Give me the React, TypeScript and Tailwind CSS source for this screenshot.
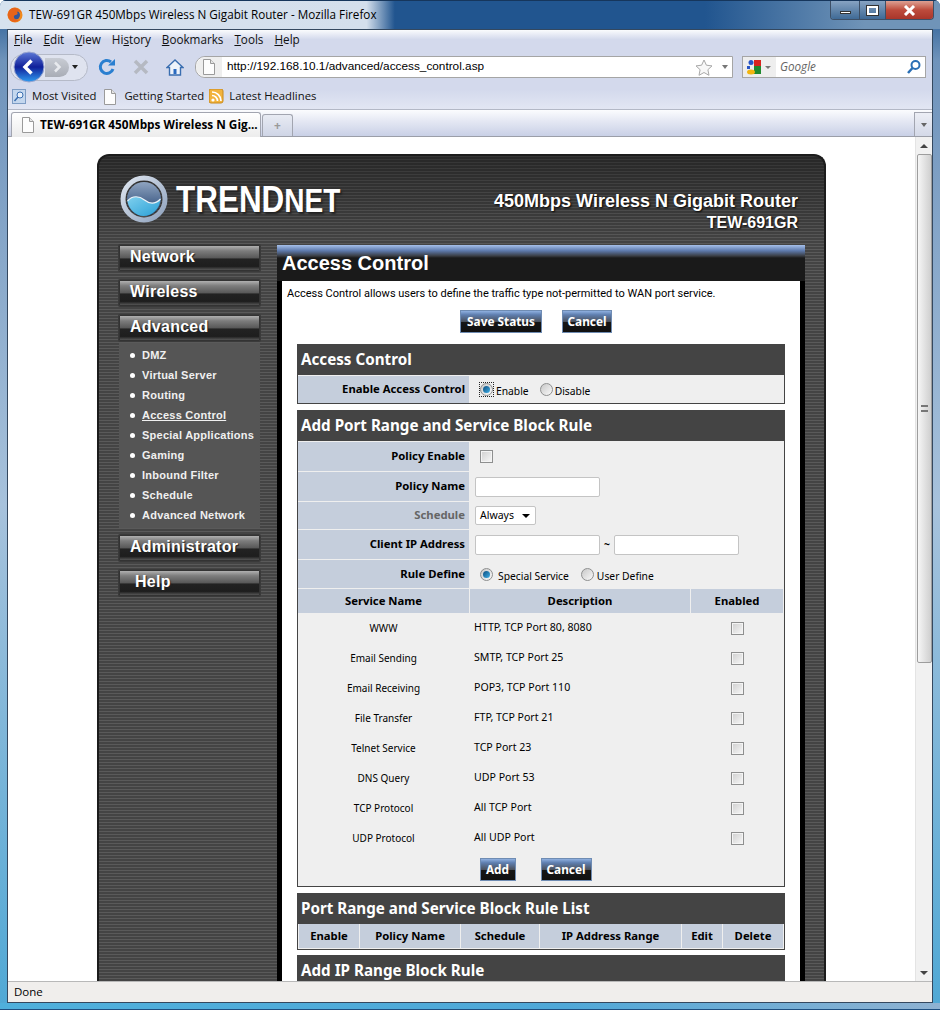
import React from "react"

const sideLinks = ["DMZ", "Virtual Server", "Routing", "Access Control", "Special Applications", "Gaming", "Inbound Filter", "Schedule", "Advanced Network"]

const services = [
  ["WWW", "HTTP, TCP Port 80, 8080"],
  ["Email Sending", "SMTP, TCP Port 25"],
  ["Email Receiving", "POP3, TCP Port 110"],
  ["File Transfer", "FTP, TCP Port 21"],
  ["Telnet Service", "TCP Port 23"],
  ["DNS Query", "UDP Port 53"],
  ["TCP Protocol", "All TCP Port"],
  ["UDP Protocol", "All UDP Port"],
]

function PageIcon({ className = "" }: { className?: string }) {
  return (
    <svg width="14" height="16" viewBox="0 0 14 16" className={className}>
      <path d="M1.5.5h7l4 4v11h-11z" fill="#fdfdfd" stroke="#9a9a9a" />
      <path d="M8.5.5v4h4" fill="#e6e6e6" stroke="#9a9a9a" />
    </svg>
  )
}

function Checkbox({ className = "" }: { className?: string }) {
  return <span className={`block h-[13px] w-[13px] border border-[#8e8f8f] bg-gradient-to-br from-[#cfcfcf] to-[#f8f8f8] shadow-[inset_0_0_0_1px_#f4f4f4] ${className}`} />
}

function Radio({ on = false }: { on?: boolean }) {
  return (
    <span className="flex h-[13px] w-[13px] items-center justify-center rounded-full border border-[#8e8f8f] bg-gradient-to-br from-[#c8c8c8] to-[#fafafa]">
      {on && <span className="h-[7px] w-[7px] rounded-full bg-gradient-to-br from-[#0e4f80] to-[#3fb0e8]" />}
    </span>
  )
}

function PageButton({ label, width }: { label: string; width: string }) {
  return (
    <button className={`${width} h-[23px] border border-[#6f8cb3] bg-[linear-gradient(180deg,#8fb0e0_0%,#5f7fb0_18%,#4a4f58_52%,#161616_53%,#111_100%)] text-center font-['Noto_Sans',sans-serif] text-[11.8px] font-bold text-white`}>
      {label}
    </button>
  )
}

function NavButton({ label, indent = "pl-[10px]" }: { label: string; indent?: string }) {
  return (
    <div className="h-[26px] rounded-[1px] border border-[#333] bg-[linear-gradient(180deg,#b0b0b0_0%,#7d7d7d_20%,#5a5a5a_48%,#222_55%,#1e1e1e_85%,#555_100%)] shadow-[0_0_0_1px_#3a3a3a]">
      <div className={`${indent} font-['Liberation_Sans',sans-serif] text-[16px] leading-[22px] font-bold tracking-[0.25px] text-white [text-shadow:1px_1px_1px_#222]`}>{label}</div>
    </div>
  )
}

function SectionTitle({ children }: { children: React.ReactNode }) {
  return (
    <div className="flex h-[30px] items-center bg-[#444] pb-[2px] pl-[3px] font-['Noto_Sans',sans-serif] text-[15.2px] font-bold whitespace-nowrap text-white">
      {children}
    </div>
  )
}

function FormRow({ label, height, dim = false, children }: { label: string; height: string; dim?: boolean; children: React.ReactNode }) {
  return (
    <div className={`${height} grid grid-cols-[171px_1fr] border-b border-[#efefef] last:border-b-0`}>
      <div className={`flex items-center justify-end bg-[#c5cedc] pr-[4px] text-[11.3px] font-bold ${dim ? "text-[#666]" : "text-black"}`}>{label}</div>
      <div className="flex items-center pl-[6px] text-[10.3px]">{children}</div>
    </div>
  )
}

function TextBox({ width = "w-[125px]" }: { width?: string }) {
  return <span className={`${width} block h-[20px] rounded-[2px] border border-[#c4c4c4] bg-white`} />
}

function RouterPage() {
  return (
    <div className="w-[729px] rounded-t-[12px] border-x-2 border-t-2 border-[#1c1c1c] bg-[linear-gradient(180deg,rgba(0,0,0,0.42)_0px,rgba(0,0,0,0)_90px),repeating-linear-gradient(180deg,#5a5a5a_0px,#5a5a5a_1px,#444_1px,#444_3px)]">
      <div className="flex h-[89px] items-start justify-between pr-[26px]">
        <div className="ml-[21px] mt-[19px] flex items-center gap-[8px]">
          <svg width="48" height="48" viewBox="0 0 48 48">
            <defs>
              <linearGradient id="ring" x1="0" y1="0" x2="1" y2="1">
                <stop offset="0" stopColor="#dfe6f0" />
                <stop offset="1" stopColor="#8fa2bd" />
              </linearGradient>
              <linearGradient id="ballTop" x1="0" y1="0" x2="0" y2="1">
                <stop offset="0" stopColor="#8fa4c0" />
                <stop offset="1" stopColor="#1f3f6e" />
              </linearGradient>
              <linearGradient id="ballLow" x1="0" y1="0" x2="1" y2="1">
                <stop offset="0" stopColor="#7fd0ee" />
                <stop offset="1" stopColor="#2a9fd6" />
              </linearGradient>
            </defs>
            <circle cx="24" cy="24" r="21" fill="none" stroke="url(#ring)" strokeWidth="5" />
            <circle cx="24" cy="24" r="17" fill="url(#ballTop)" />
            <path d="M7.5 26c5-6 12-5 17-1s11 4 16-1c-1 10-8 17-17 17-8 0-15-7-16-15z" fill="url(#ballLow)" />
            <path d="M7.5 26c5-6 12-5 17-1s11 4 16-1" fill="none" stroke="#eef3f8" strokeWidth="1.2" />
          </svg>
          <div className="origin-left scale-x-[0.85] font-['Liberation_Sans',sans-serif] text-[37px] leading-none font-bold whitespace-nowrap text-white [text-shadow:2px_2px_2px_#222]">
            TREND<span className="text-[33px]">NET</span>
          </div>
        </div>
        <div className="mt-[34px] text-right font-['Liberation_Sans',sans-serif] font-bold text-white [text-shadow:1px_1px_2px_#000]">
          <div className="text-[18px] leading-[22px]">450Mbps Wireless N Gigabit Router</div>
          <div className="text-[16px] leading-[21px]">TEW-691GR</div>
        </div>
      </div>

      <div className="flex pb-[40px]">
        <div className="ml-[20px] flex w-[141px] flex-col gap-[9px]">
          <NavButton label="Network" />
          <NavButton label="Wireless" />
          <div className="-mb-[2px]">
            <NavButton label="Advanced" />
            <div className="mt-[2px] flex h-[185px] flex-col bg-[#555] pl-[11px] pt-[2px]">
              {sideLinks.map((link) => (
                <div key={link} className="flex h-[20px] items-center gap-[7px] font-['Liberation_Sans',sans-serif] text-[11px] font-bold tracking-[0.25px] text-[#f0f0f0]">
                  <span className="h-[5px] w-[5px] rounded-full bg-white" />
                  <span className={link === "Access Control" ? "underline" : ""}>{link}</span>
                </div>
              ))}
            </div>
          </div>
          <NavButton label="Administrator" />
          <NavButton label="Help" indent="pl-[15px]" />
        </div>

        <div className="ml-[17px] w-[528px]">
          <div className="h-[36px] bg-[linear-gradient(180deg,#a6c0ea_0%,#5d79ab_16%,#3b3f46_30%,#1a1a1a_36%,#1a1a1a_100%)] pl-[5px] pt-[7px] font-['Liberation_Sans',sans-serif] text-[20px] leading-[23px] font-bold text-white">
            Access Control
          </div>
          <div className="border-x-[5px] border-black bg-white px-[15px] pb-[20px] font-['Noto_Sans',sans-serif] text-black">
            <div className="-mx-[10px] pt-[5px] font-['Roboto',sans-serif] text-[11px] leading-[15px] whitespace-nowrap">
              Access Control allows users to define the traffic type not-permitted to WAN port service.
            </div>
            <div className="mt-[9px] flex justify-center gap-[20px] pr-[10px]">
              <PageButton label="Save Status" width="w-[82px]" />
              <PageButton label="Cancel" width="w-[50px]" />
            </div>

            <div className="mt-[11px] border border-[#444] bg-[#efefef]">
              <SectionTitle>Access Control</SectionTitle>
              <div className="pt-px pr-px">
                <FormRow label="Enable Access Control" height="h-[27px]">
                  <div className="flex items-center gap-[2px] pl-[4px]">
                    <span className="block border border-dotted border-[#222] p-0">
                      <Radio on />
                    </span>
                    <span className="pt-[5px]">Enable</span>
                  </div>
                  <div className="ml-[11px] flex items-center gap-[2px]">
                    <Radio />
                    <span className="pt-[5px]">Disable</span>
                  </div>
                </FormRow>
              </div>
            </div>

            <div className="mt-[6px] border border-[#444] bg-[#efefef]">
              <SectionTitle>Add Port Range and Service Block Rule</SectionTitle>
              <div className="pt-px pr-px">
                <FormRow label="Policy Enable" height="h-[30px]">
                  <Checkbox className="ml-[5px]" />
                </FormRow>
                <FormRow label="Policy Name" height="h-[30px]">
                  <TextBox />
                </FormRow>
                <FormRow label="Schedule" height="h-[28px]" dim>
                  <span className="flex h-[19px] w-[61px] items-center justify-between rounded-[2px] border border-[#c4c4c4] bg-white pl-[4px] pr-[5px] text-[10.5px]">
                    Always
                    <span className="h-0 w-0 border-x-[4px] border-t-[4px] border-x-transparent border-t-black" />
                  </span>
                </FormRow>
                <FormRow label="Client IP Address" height="h-[30px]">
                  <TextBox />
                  <span className="w-[14px] text-center font-bold">~</span>
                  <TextBox />
                </FormRow>
                <FormRow label="Rule Define" height="h-[29px]">
                  <div className="flex items-center gap-[5px] pl-[5px]">
                    <Radio on />
                    <span className="pt-[5px]">Special Service</span>
                  </div>
                  <div className="ml-[12px] flex items-center gap-[3px]">
                    <Radio />
                    <span className="pt-[5px]">User Define</span>
                  </div>
                </FormRow>
                <div className="grid h-[24px] grid-cols-[171px_220px_1fr] gap-x-px text-center text-[11.3px] leading-[24px] font-bold">
                  <div className="bg-[#c5cedc]">Service Name</div>
                  <div className="bg-[#c5cedc]">Description</div>
                  <div className="bg-[#c5cedc]">Enabled</div>
                </div>
                {services.map(([name, desc]) => (
                  <div key={name} className="grid h-[30px] grid-cols-[171px_220px_1fr] items-center gap-x-px">
                    <div className="text-center text-[10px]">{name}</div>
                    <div className="pl-[4px] text-[10.6px]">{desc}</div>
                    <div className="flex justify-center">
                      <Checkbox />
                    </div>
                  </div>
                ))}
                <div className="mt-[5px] flex h-[28px] justify-center gap-[25px] pr-[10px]">
                  <PageButton label="Add" width="w-[36px]" />
                  <PageButton label="Cancel" width="w-[51px]" />
                </div>
              </div>
            </div>

            <div className="mt-[6px] border border-[#444] bg-[#efefef]">
              <SectionTitle>Port Range and Service Block Rule List</SectionTitle>
              <div className="px-px pb-px">
                <div className="grid h-[24px] grid-cols-[60px_100px_78px_141px_40px_1fr] gap-x-px text-center text-[11.3px] leading-[24px] font-bold">
                  {["Enable", "Policy Name", "Schedule", "IP Address Range", "Edit", "Delete"].map((head) => (
                    <div key={head} className="bg-[#c5cedc]">{head}</div>
                  ))}
                </div>
              </div>
            </div>

            <div className="mt-[5px] h-[60px] border border-[#444] bg-[#444]">
              <SectionTitle>Add IP Range Block Rule</SectionTitle>
            </div>
          </div>
        </div>
      </div>
    </div>
  )
}

function Scrollbar() {
  return (
    <div className="flex w-[17px] flex-col items-center border-l border-[#e4e4e4] bg-[#f1f1f1]">
      <div className="flex h-[17px] items-center justify-center">
        <span className="h-0 w-0 border-x-[4px] border-b-[4px] border-x-transparent border-b-[#444]" />
      </div>
      <div className="flex h-[509px] w-[15px] items-center justify-center rounded-[2px] border border-[#9d9d9d] bg-gradient-to-r from-[#f6f6f6] to-[#cfcfcf]">
        <span className="h-[7px] w-[7px] border-y-2 border-[#777]" />
      </div>
      <div className="flex-1" />
      <div className="flex h-[17px] items-center justify-center">
        <span className="h-0 w-0 border-x-[4px] border-t-[4px] border-x-transparent border-t-[#444]" />
      </div>
    </div>
  )
}

export default function App() {
  return (
    <div className="flex h-[1010px] w-[940px] flex-col overflow-hidden rounded-t-[6px] bg-[linear-gradient(180deg,#21568f_0%,#6f93bb_6%,#a7c2dc_50%,#4fa8d5_100%)] font-['Open_Sans',sans-serif] text-black">
      <div className="flex h-[29px] shrink-0 items-start justify-between border-t border-[#16365c] bg-[linear-gradient(90deg,#d6e2ef_0%,#d4dfec_39%,#21558f_42%,#21558f_75%,#7094b8_92%)] pl-[7px] pr-[6px]">
        <div className="flex h-[28px] items-center gap-[6px]">
          <svg width="16" height="16" viewBox="0 0 16 16">
            <circle cx="8" cy="8" r="7.5" fill="#f08a1d" />
            <circle cx="8.5" cy="8" r="4.5" fill="#35589c" />
            <path d="M1 6c1-4 5-6 8-5 3 .5 5 3 6 5-1-1-3-2-5-1 1 1 1 2-1 3-2 0-3 2-1 4 1 1 3 1 5 0-2 3-6 4-9 2C2 12 0 9 1 6z" fill="#e7641b" />
          </svg>
          <span className="text-[11.7px] whitespace-nowrap">TEW-691GR 450Mbps Wireless N Gigabit Router - Mozilla Firefox</span>
        </div>
        <div className="flex h-[19px] w-[104px] overflow-hidden rounded-b-[4px] border border-t-0 border-[#3d4f66]">
          <div className="flex w-[28px] items-end justify-center bg-gradient-to-b from-[#87a3c2] to-[#3f6a96] pb-[5px]">
            <span className="h-[3px] w-[11px] border border-[#333] bg-white" />
          </div>
          <div className="flex w-[27px] items-center justify-center border-x border-[#3d4f66] bg-gradient-to-b from-[#87a3c2] to-[#3f6a96]">
            <span className="h-[9px] w-[11px] border-2 border-white outline outline-[#333]" />
          </div>
          <div className="flex flex-1 items-center justify-center bg-gradient-to-b from-[#dca093] via-[#bd4b3c] to-[#a9352a]">
            <svg width="13" height="11" viewBox="0 0 13 11"><path d="m2 1 9 9M11 1l-9 9" stroke="#fff" strokeWidth="3" /></svg>
          </div>
        </div>
      </div>

      <div className="mx-[7px] flex min-h-0 flex-1 flex-col border border-[#34485f] bg-white">
        <div className="h-[80px] shrink-0 border-b border-[#b3b8c6] bg-[linear-gradient(180deg,#fafbfd_0%,#d3d9ec_12%,#d3d9ec_75%,#e2e6f3_100%)]">
          <div className="flex h-[20px] items-center gap-[11px] pl-[6px] text-[11.7px] text-[#111]">
            <span><span className="underline">F</span>ile</span>
            <span><span className="underline">E</span>dit</span>
            <span><span className="underline">V</span>iew</span>
            <span>Hi<span className="underline">s</span>tory</span>
            <span><span className="underline">B</span>ookmarks</span>
            <span><span className="underline">T</span>ools</span>
            <span><span className="underline">H</span>elp</span>
          </div>

          <div className="flex h-[34px] items-center">
            <div className="ml-[2px] flex h-[27px] w-[78px] items-center rounded-full border border-[#b5bac8] bg-[#dfe3ef] pl-[3px]">
              <svg width="32" height="32" viewBox="0 0 32 32" className="-ml-px shrink-0">
                <defs>
                  <linearGradient id="back" x1="0" y1="0" x2="0" y2="1">
                    <stop offset="0" stopColor="#5d79d6" />
                    <stop offset="0.5" stopColor="#10209a" />
                    <stop offset="1" stopColor="#2f9cf0" />
                  </linearGradient>
                </defs>
                <circle cx="16" cy="16" r="15" fill="url(#back)" stroke="#9aa6cf" />
                <path d="M18.5 9.5 12 16l6.5 6.5" fill="none" stroke="#fff" strokeWidth="3.5" />
              </svg>
              <div className="flex h-[19px] w-[24px] items-center justify-center rounded-r-full bg-gradient-to-b from-[#c8ccd4] to-[#a9adb6]">
                <svg width="10" height="12" viewBox="0 0 10 12"><path d="M3 1.5 7.5 6 3 10.5" fill="none" stroke="#e8eaee" strokeWidth="2.5" /></svg>
              </div>
              <span className="ml-[3px] h-0 w-0 border-x-[3px] border-t-[4px] border-x-transparent border-t-[#222]" />
            </div>
            <div className="ml-[10px] flex w-[86px] items-center justify-between">
              <svg width="18" height="18" viewBox="0 0 18 18"><path d="M15 11a6.5 6.5 0 1 1-2-7" fill="none" stroke="#2a7fd0" strokeWidth="3" /><path d="M10 7.5h7V1z" fill="#2a7fd0" /></svg>
              <svg width="16" height="16" viewBox="0 0 16 16"><path d="m2 2 12 12M14 2 2 14" stroke="#b5b9c2" strokeWidth="3.5" /></svg>
              <svg width="18" height="17" viewBox="0 0 18 17"><path d="M9 1 1 8.5h2.5V16h11V8.5H17z" fill="#eef3fa" stroke="#3a6eb0" strokeWidth="1.4" /><rect x="7.5" y="10" width="3" height="5" fill="#2a6ac0" /></svg>
            </div>
            <div className="ml-[11px] flex h-[22px] w-[538px] items-center rounded-l-[10px] border border-[#a5a5a5] bg-white">
              <div className="flex h-full w-[26px] items-center justify-center rounded-l-[10px] bg-[#eeeeee]">
                <PageIcon />
              </div>
              <span className="ml-[5px] flex-1 font-['Liberation_Sans',sans-serif] text-[11.8px]">http://192.168.10.1/advanced/access_control.asp</span>
              <svg width="18" height="17" viewBox="0 0 18 17"><path d="m9 1 2.4 5.2 5.6.7-4.1 3.8 1.1 5.6L9 13.5l-5 2.8 1.1-5.6L1 6.9l5.6-.7z" fill="#f8f8f8" stroke="#a8a8a8" /></svg>
              <span className="ml-[9px] mr-[4px] h-0 w-0 border-x-[3px] border-t-[4px] border-x-transparent border-t-[#777]" />
            </div>
            <div className="ml-[9px] flex h-[22px] w-[184px] items-center border border-[#a5a5a5] bg-white">
              <div className="flex h-full w-[33px] items-center gap-[3px] bg-[#eeeeee] pl-[3px]">
                <svg width="16" height="16" viewBox="0 0 16 16">
                  <rect x="8" y="1" width="7" height="7" fill="#d8231f" />
                  <rect x="8" y="7" width="7" height="8" fill="#1e8a2d" />
                  <circle cx="5" cy="3.5" r="2.5" fill="#2855c5" />
                  <rect x="1" y="7" width="3" height="3" fill="#2855c5" />
                  <ellipse cx="5" cy="13" rx="4" ry="2.5" fill="#f2b50f" />
                </svg>
                <span className="h-0 w-0 border-x-[3px] border-t-[3px] border-x-transparent border-t-[#777]" />
              </div>
              <span className="ml-[4px] flex-1 text-[11.7px] text-[#666] italic">Google</span>
              <svg width="16" height="16" viewBox="0 0 16 16" className="mr-[3px]"><circle cx="9.5" cy="6" r="4" fill="none" stroke="#2a6fb5" strokeWidth="2" /><path d="M6.5 9 2 14" stroke="#2a6fb5" strokeWidth="2.5" /></svg>
            </div>
          </div>

          <div className="flex h-[25px] items-center pl-[4px] text-[11.3px] text-[#111]">
            <svg width="14" height="15" viewBox="0 0 14 15"><rect x=".5" y=".5" width="13" height="14" fill="#c4d7ee" stroke="#7d9cc4" /><circle cx="8" cy="6" r="3" fill="#e9f1fb" stroke="#3a6eb0" /><path d="M6 8 2.5 12" stroke="#3a6eb0" strokeWidth="1.5" /></svg>
            <span className="ml-[6px]">Most Visited</span>
            <PageIcon className="ml-[7px]" />
            <span className="ml-[7px]">Getting Started</span>
            <svg width="15" height="15" viewBox="0 0 15 15" className="ml-[5px]"><rect width="14" height="14" rx="2" fill="#f2b33d" stroke="#c98a1c" /><circle cx="4" cy="11" r="1.6" fill="#fff" /><path d="M3 6.5a5.5 5.5 0 0 1 5.5 5.5M3 3a9 9 0 0 1 9 9" fill="none" stroke="#fff" strokeWidth="1.7" /></svg>
            <span className="ml-[5px]">Latest Headlines</span>
          </div>
        </div>

        <div className="flex h-[27px] shrink-0 items-end border-b border-[#9b9ea8] bg-[linear-gradient(180deg,#fbfcfe_0%,#e6e9f4_40%,#c9d0e6_100%)] pl-[3px]">
          <div className="-mb-px flex h-[25px] w-[250px] items-center gap-[5px] rounded-t-[3px] border border-b-0 border-[#a2a5b0] bg-gradient-to-b from-white to-[#ececec] pl-[9px]">
            <PageIcon />
            <span className="text-[11.8px] font-bold whitespace-nowrap">TEW-691GR 450Mbps Wireless N Gig...</span>
          </div>
          <div className="ml-px flex h-[22px] w-[31px] items-center justify-center rounded-t-[3px] border border-b-0 border-[#a2a5b0] bg-gradient-to-b from-[#e8ebf3] to-[#cfd5e6] text-[12px] font-bold text-[#999]">+</div>
          <div className="flex-1" />
          <div className="flex h-[24px] w-[18px] items-center justify-center border border-b-0 border-r-0 border-[#a2a5b0] bg-gradient-to-b from-[#eceef5] to-[#d4d9e8]">
            <span className="h-0 w-0 border-x-[3px] border-t-[4px] border-x-transparent border-t-[#666]" />
          </div>
        </div>

        <div className="flex min-h-0 flex-1">
          <div className="min-w-0 flex-1 overflow-hidden bg-white pl-[89px] pt-[17px]">
            <RouterPage />
          </div>
          <Scrollbar />
        </div>

        <div className="flex h-[21px] shrink-0 items-center border-t border-[#b8b8b8] bg-[#f0eeec] pl-[6px] text-[11.5px]">Done</div>
      </div>
      <div className="h-[7px] shrink-0 border-b border-[#1f4f80] bg-[linear-gradient(90deg,#4fb0dc_0%,#4fa8d8_60%,#8fb2d2_100%)]" />
    </div>
  )
}
